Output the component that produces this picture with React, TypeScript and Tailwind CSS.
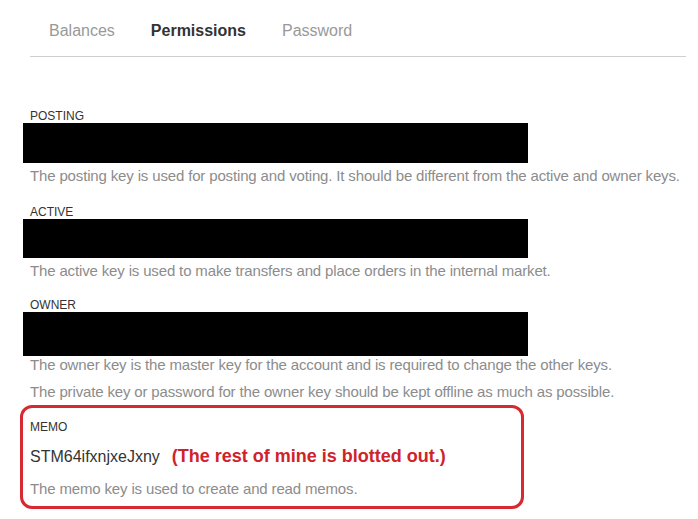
import React from 'react';

const tabs = [
  { label: 'Balances', active: false },
  { label: 'Permissions', active: true },
  { label: 'Password', active: false },
];

const KeyBlock: React.FC<{ label: string; lines: string[]; barH: string; descCls: string }> = ({
  label,
  lines,
  barH,
  descCls,
}) => (
  <div className="flex flex-col">
    <div className="pl-[7px] text-[12px] leading-[14px] text-[#333]">{label}</div>
    <div className={`w-[505px] ${barH} bg-black`} />
    <div className={descCls}>
      {lines.map((l) => (
        <p key={l} className="pl-[7px] text-[15px] text-[#8c8c8c] tracking-[-0.15px]">
          {l}
        </p>
      ))}
    </div>
  </div>
);

const App: React.FC = () => {
  return (
    <div className="w-[698px] h-[519px] bg-white overflow-hidden font-['Liberation_Sans',Arial,sans-serif]">
      {/* Tabs */}
      <div className="ml-[30px] mr-[12px] h-[57px] border-b border-[#cfcfcf] flex items-center gap-[36px] pl-[19px] pt-[6px]">
        {tabs.map((t) => (
          <span
            key={t.label}
            className={`text-[16px] ${t.active ? 'font-bold text-[#333]' : 'text-[#999]'}`}
          >
            {t.label}
          </span>
        ))}
      </div>

      <div className="pl-[23px] pt-[52px] flex flex-col">
        <KeyBlock
          label="POSTING"
          barH="h-[40px]"
          descCls="leading-[25px] mb-[17px]"
          lines={['The posting key is used for posting and voting. It should be different from the active and owner keys.']}
        />
        <KeyBlock
          label="ACTIVE"
          barH="h-[39px]"
          descCls="leading-[25px] mb-[15px]"
          lines={['The active key is used to make transfers and place orders in the internal market.']}
        />
        <KeyBlock
          label="OWNER"
          barH="h-[44px]"
          descCls="leading-[27px] -mt-[5px]"
          lines={[
            'The owner key is the master key for the account and is required to change the other keys.',
            'The private key or password for the owner key should be kept offline as much as possible.',
          ]}
        />
      </div>

      {/* Memo */}
      <div className="ml-[20px] w-[504px] h-[104px] border-[3px] border-[#d62a30] rounded-[12px] pl-[7px] pt-[12px]">
        <div className="text-[12px] leading-[14px] text-[#333]">MEMO</div>
        <div className="mt-[9px] flex items-baseline gap-[12px]">
          <span className="text-[16px] text-[#333]">STM64ifxnjxeJxny</span>
          <span className="text-[18px] font-bold text-[#d0222a]">(The rest of mine is blotted out.)</span>
        </div>
        <p className="mt-[8px] text-[15px] text-[#8c8c8c] tracking-[-0.15px]">The memo key is used to create and read memos.</p>
      </div>
    </div>
  );
};

export default App;
